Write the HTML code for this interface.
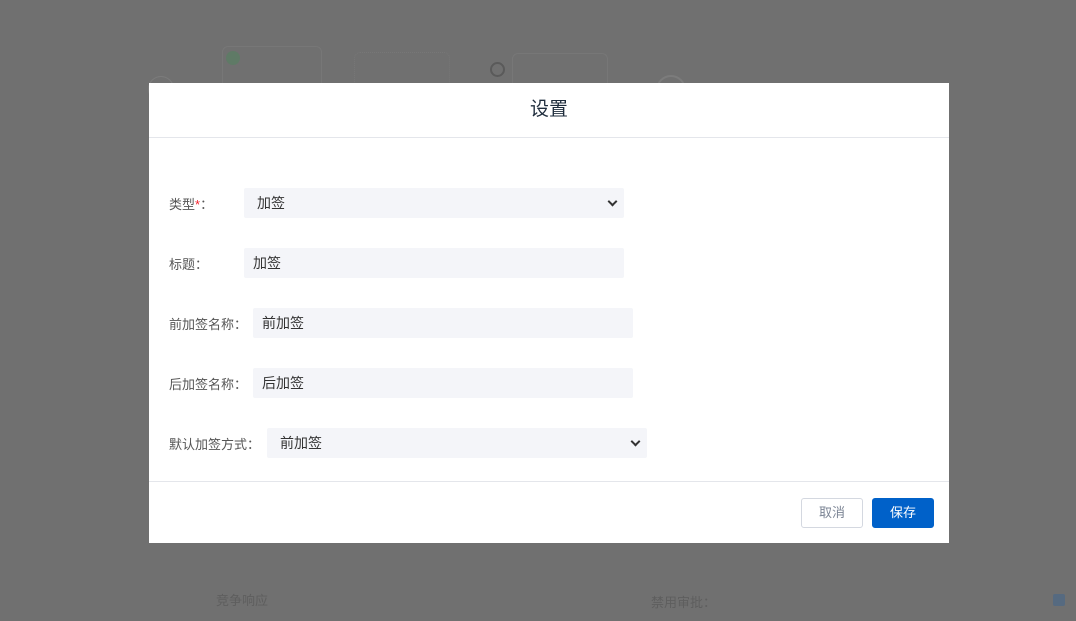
<!DOCTYPE html>
<html><head><meta charset="utf-8"><style>
*{box-sizing:border-box;margin:0;padding:0}
body{width:1076px;height:621px;background:#707070;position:relative;overflow:hidden;font-family:"Liberation Sans","Noto Sans CJK SC",sans-serif}
.bg{position:absolute;border:1px solid #777;border-radius:6px}
.dlg{position:absolute;left:149px;top:83px;width:800px;height:460px;background:#fff}
.hd{height:55px;border-bottom:1px solid #e4e6eb;text-align:center;line-height:54px;font-size:19px;color:#1f2d3d}
.row{position:absolute;left:20px;font-size:13px;color:#555;display:flex;align-items:center;height:30px}
.f{height:30px;background:#f4f5f9;border-radius:2px;font-size:14px;color:#333;padding-left:9px;line-height:30px;position:relative}
.sel{padding-left:13px}
.sel:after{content:"";position:absolute;right:8px;top:10px;width:5px;height:5px;border-right:2px solid #333;border-bottom:2px solid #333;transform:rotate(45deg)}
.ft{position:absolute;left:0;right:0;top:398px;border-top:1px solid #e4e6eb}
.btn{position:absolute;top:415px;width:62px;height:30px;border-radius:3px;font-size:13px;text-align:center;line-height:28px}
</style></head><body>
<div class="bg" style="left:222px;top:46px;width:100px;height:60px"></div>
<div style="position:absolute;left:226px;top:51px;width:14px;height:14px;border-radius:50%;background:#5f7a66"></div>
<div class="bg" style="left:354px;top:52px;width:96px;height:50px;border-style:dotted"></div>
<div style="position:absolute;left:490px;top:62px;width:15px;height:15px;border-radius:50%;border:2px solid #5a5a5a"></div>
<div class="bg" style="left:512px;top:53px;width:96px;height:50px"></div>
<div style="position:absolute;left:148px;top:76px;width:26px;height:26px;border-radius:50%;border:1px solid #7c7c7c"></div>
<div style="position:absolute;left:656px;top:75px;width:30px;height:30px;border-radius:50%;border:2px solid #7c7c7c"></div>
<div style="position:absolute;left:216px;top:590px;font-size:13px;color:#5e5e5e">竞争响应</div>
<div style="position:absolute;left:651px;top:592px;font-size:13px;color:#5e5e5e">禁用审批：</div>
<div style="position:absolute;left:1053px;top:594px;width:12px;height:12px;background:#566a80;border-radius:2px"></div>
<div class="dlg">
<div class="hd">设置</div>
<div class="row" style="top:105px"><span style="width:75px">类型<span style="color:#f5222d">*</span>：</span><div class="f sel" style="width:380px">加签</div></div>
<div class="row" style="top:165px"><span style="width:75px">标题：</span><div class="f" style="width:380px">加签</div></div>
<div class="row" style="top:225px"><span style="width:84px">前加签名称：</span><div class="f" style="width:380px">前加签</div></div>
<div class="row" style="top:285px"><span style="width:84px">后加签名称：</span><div class="f" style="width:380px">后加签</div></div>
<div class="row" style="top:345px"><span style="width:98px">默认加签方式：</span><div class="f sel" style="width:380px">前加签</div></div>
<div class="ft"></div>
<div class="btn" style="left:652px;border:1px solid #d4d8e0;color:#7b8494;background:#fff">取消</div>
<div class="btn" style="left:723px;background:#0061c9;color:#fff;border:1px solid #0061c9">保存</div>
</div>
</body></html>
